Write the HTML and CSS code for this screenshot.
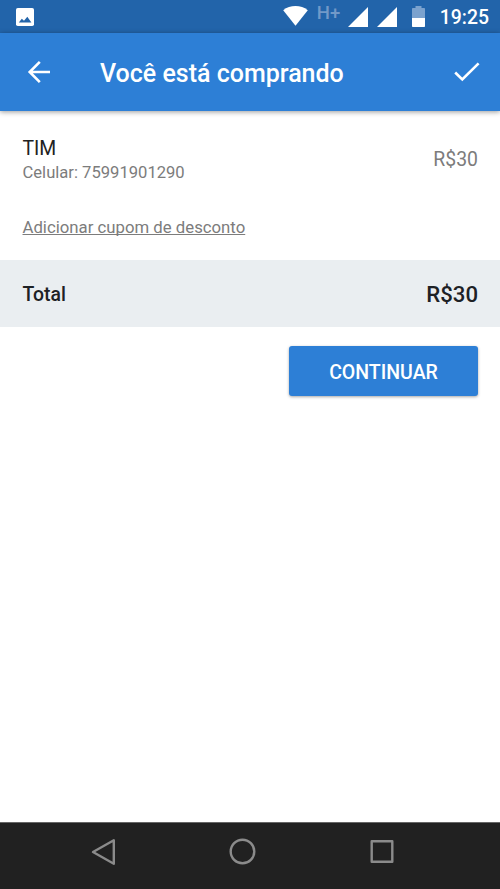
FILE: index.html
```html
<!DOCTYPE html>
<html lang="pt-BR">
<head>
<meta charset="utf-8">
<title>Você está comprando</title>
<link rel="stylesheet" href="styles.css">
</head>
<body>
<div class="screen">
  <div class="status-bar">
    <svg class="picture" width="18" height="18" viewBox="0 0 18 18"><rect width="18" height="18" rx="1.8" fill="#fff"/><path d="M2.8 14.5 5.8 10.8 8 12.8 11.3 8.8 15.4 14.5Z" fill="#2264aa"/></svg>
    <div class="indicators">
      <svg class="wifi" width="25" height="20" viewBox="0 0 25 20"><path d="M.2 4.2C7-1.3 18-1.3 24.8 4.2L12.5 19.7Z" fill="#fff"/></svg>
      <span class="network">H+</span>
      <svg class="signal" width="20" height="20" viewBox="0 0 20 20"><path d="M20 0V20H0Z" fill="#fff"/></svg>
      <svg class="signal-two" width="20" height="20" viewBox="0 0 20 20"><path d="M20 0V20H0Z" fill="#fff"/></svg>
      <svg class="battery" width="13" height="21" viewBox="0 0 13 21"><path d="M0 12V2.8Q0 2 .8 2H3.5V0H9.5V2h2.7q.8 0 .8.8V12Z" fill="#7ba2ce"/><path d="M0 12H13v8.2q0 .8-.8.8H.8Q0 21 0 20.2Z" fill="#fff"/></svg>
      <span class="clock">19:25</span>
    </div>
  </div>
  <header class="app-bar">
    <svg class="back" width="24" height="24" viewBox="0 0 24 24" fill="none" stroke="#fff" stroke-width="2.6"><path d="M23 12H3M12.8 1.9 2.7 12 12.8 22.1"/></svg>
    <h1 class="title">Você está comprando</h1>
    <svg class="check" width="26" height="20" viewBox="0 0 26 20" fill="none" stroke="#fff" stroke-width="2.6"><path d="M1.2 10.5 8.3 17.5 24.6 1.4"/></svg>
  </header>
  <main class="content">
    <section class="item">
      <div>
        <div class="item-name">TIM</div>
        <div class="item-detail">Celular: 75991901290</div>
      </div>
      <div class="item-price">R$30</div>
    </section>
    <div class="coupon"><a class="coupon-link">Adicionar cupom de desconto</a></div>
    <section class="total">
      <span class="total-label">Total</span>
      <span class="total-price">R$30</span>
    </section>
    <div class="actions"><button class="continue">CONTINUAR</button></div>
  </main>
  <nav class="nav-bar">
    <svg width="26" height="28" viewBox="0 0 26 28"><path d="M22.8 2.3V25.7L2 14Z"/></svg>
    <svg width="28" height="28" viewBox="0 0 28 28"><circle cx="13.5" cy="13.5" r="11.8"/></svg>
    <svg width="26" height="28" viewBox="0 0 26 28"><rect x="2.7" y="3.2" width="20.6" height="20.6"/></svg>
  </nav>
</div>
</body>
</html>
```

FILE: styles.css
```css
* { box-sizing: border-box; }
body {
  margin: 0;
  background: #fff;
  font-family: Roboto, "Liberation Sans", sans-serif;
}
svg { display: block; flex: none; }
.screen {
  height: 889px;
  display: flex;
  flex-direction: column;
  overflow: hidden;
}
.status-bar {
  height: 33px;
  flex: none;
  display: flex;
  justify-content: space-between;
  align-items: flex-start;
  padding: 0 11px 0 16px;
  background: #2264aa;
}
.picture { margin-top: 8px; }
.indicators { display: flex; align-items: flex-start; }
.wifi { margin-top: 6px; }
.network {
  width: 24px;
  margin: 2px 7px 0 9px;
  font-size: 18.5px;
  font-weight: 500;
  line-height: 22px;
  color: #7299c8;
}
.signal { margin-top: 7px; }
.signal-two { margin: 7px 15px 0 9px; }
.battery { margin: 6px 15px 0 0; }
.clock {
  font-size: 19.4px;
  font-weight: 500;
  line-height: 36px;
  color: #fff;
}
.app-bar {
  height: 78px;
  flex: none;
  display: flex;
  align-items: center;
  padding: 0 20px 0 27px;
  background: #2d7fd6;
  box-shadow: 0 1px 5px rgba(0, 0, 0, .4);
}
.title {
  flex: 1;
  margin: 4px 0 0 49px;
  font-size: 25px;
  font-weight: 500;
  line-height: 30px;
  color: #fff;
}
.content { flex: 1; }
.item {
  display: flex;
  justify-content: space-between;
  align-items: center;
  padding: 25px 22px 0 22.5px;
}
.item-name {
  font-size: 19.4px;
  line-height: 25px;
  color: #212121;
}
.item-detail {
  font-size: 16.6px;
  line-height: 24px;
  color: #7c7c7c;
}
.item-price {
  margin-top: -2px;
  font-size: 19.4px;
  line-height: 24px;
  color: #7c7c7c;
}
.coupon {
  height: 75px;
  padding: 30px 22px 0 22.5px;
  font-size: 16.75px;
  line-height: 24px;
  color: #7c7c7c;
}
.coupon-link {
  text-decoration: underline;
  text-decoration-skip-ink: none;
}
.total {
  height: 67px;
  display: flex;
  justify-content: space-between;
  align-items: center;
  padding: 0 22px 0 22.5px;
  background: #eaeef1;
  font-weight: 500;
  color: #1d2125;
}
.total-label {
  padding-top: 2px;
  font-size: 19.4px;
}
.total-price { font-size: 22.2px; }
.actions {
  display: flex;
  justify-content: flex-end;
  padding: 19px 22px 0;
}
.continue {
  width: 189px;
  height: 50px;
  padding: 2px 0 0;
  border: 0;
  border-radius: 3px;
  background: #2d7fd6;
  box-shadow: 0 1px 3px rgba(0, 0, 0, .35);
  font-family: inherit;
  font-size: 19.5px;
  font-weight: 500;
  color: #fff;
}
.nav-bar {
  height: 67px;
  flex: none;
  display: flex;
  justify-content: space-between;
  padding: 15px 105px 0 91px;
  border-top: 1px solid #666;
  background: #212121;
  fill: none;
  stroke: #8b8b8b;
  stroke-width: 2.4;
  stroke-linejoin: round;
}
```
